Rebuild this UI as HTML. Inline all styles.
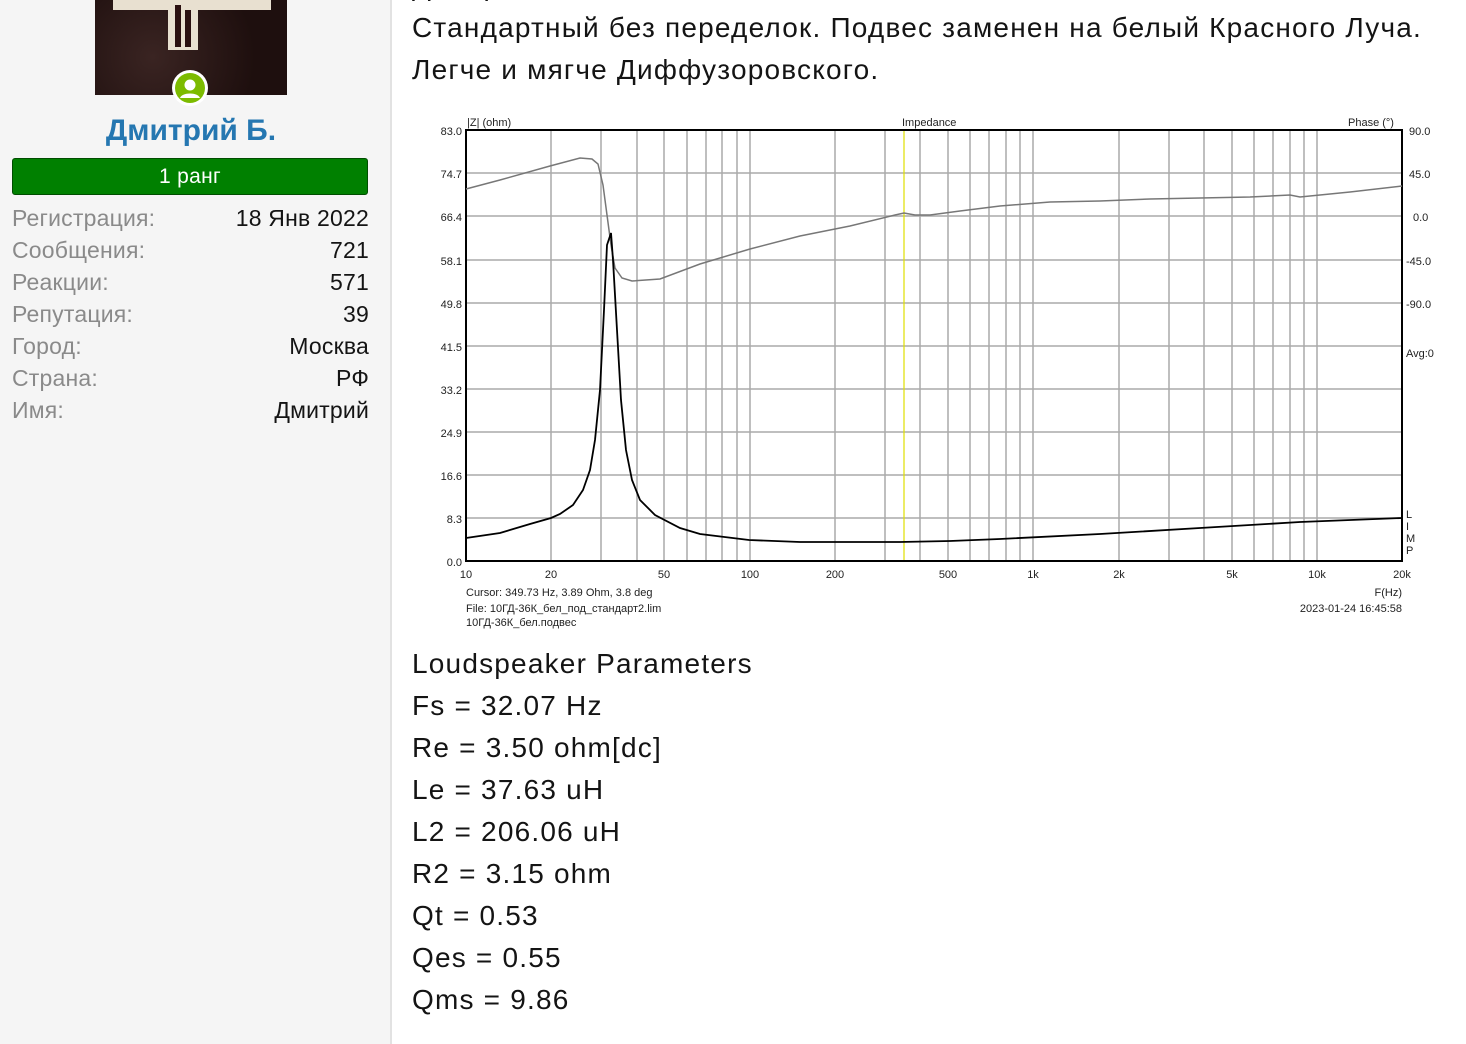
<!DOCTYPE html>
<html><head><meta charset="utf-8"><style>
html,body{margin:0;padding:0;width:1466px;height:1044px;overflow:hidden;background:#fff;font-family:"Liberation Sans",Arial,sans-serif;}
.side{position:absolute;left:0;top:0;width:390px;height:1044px;background:#f5f5f5;border-right:2px solid #e2e2e2;}
.av{position:absolute;left:95px;top:0;width:192px;height:95px;background:radial-gradient(circle at 30% 60%,#3a2422,#1e0f0e 70%);overflow:hidden}
.badge{position:absolute;left:172px;top:70px;width:36px;height:36px;border-radius:50%;background:#fff}
.badge i{position:absolute;left:3px;top:3px;width:30px;height:30px;border-radius:50%;background:#7cbb00;overflow:hidden}
.name{position:absolute;left:0;width:382px;top:114px;text-align:center;color:#2577b1;font-weight:bold;font-size:30px}
.rank{position:absolute;left:12px;top:158px;width:354px;height:35px;background:#008000;border:1.5px solid #004d00;border-radius:3px;color:#fff;font-size:21px;text-align:center;line-height:36px;letter-spacing:0.3px}
.row{position:absolute;left:12px;width:357px;font-size:23px;letter-spacing:0.2px;height:32px;line-height:32px}
.row span{color:#8a8a8a}.row b{float:right;font-weight:normal;color:#141414}
.t{position:absolute;left:412px;font-size:28px;letter-spacing:1.2px;color:#141414;white-space:nowrap;line-height:42px}
</style></head><body>
<div class="side">
<div class="av">
 <div style="position:absolute;left:18px;top:-6px;width:158px;height:16px;background:#e8e0d0"></div>
 <div style="position:absolute;left:73px;top:-6px;width:30px;height:56px;background:#e8e0d0"></div>
 <div style="position:absolute;left:80px;top:5px;width:6px;height:42px;background:#2a1010"></div>
 <div style="position:absolute;left:90px;top:10px;width:6px;height:37px;background:#2a1010"></div>
</div>
<div class="badge"><i><svg width="30" height="30" viewBox="0 0 30 30"><circle cx="15" cy="12" r="5.5" fill="#fff"/><path d="M5 25c2-6 18-6 20 0z" fill="#fff"/></svg></i></div>
<div class="name">Дмитрий Б.</div>
<div class="rank">1 ранг</div>
<div class="row" style="top:202px"><span>Регистрация:</span><b>18 Янв 2022</b></div>
<div class="row" style="top:234px"><span>Сообщения:</span><b>721</b></div>
<div class="row" style="top:266px"><span>Реакции:</span><b>571</b></div>
<div class="row" style="top:298px"><span>Репутация:</span><b>39</b></div>
<div class="row" style="top:330px"><span>Город:</span><b>Москва</b></div>
<div class="row" style="top:362px"><span>Страна:</span><b>РФ</b></div>
<div class="row" style="top:394px"><span>Имя:</span><b>Дмитрий</b></div>
</div>
<div class="t" style="top:-35px">Дмитрий Б. писал:</div>
<div class="t" style="top:7px">Стандартный без переделок. Подвес заменен на белый Красного Луча.</div>
<div class="t" style="top:49px">Легче и мягче Диффузоровского.</div>

<svg style="position:absolute;left:0;top:0" width="1466" height="1044" font-family="Liberation Sans,Arial,sans-serif" font-size="11" fill="#222">
<g stroke="#aaa" stroke-width="1.5">
<line x1="466" y1="173" x2="1402" y2="173"/><line x1="466" y1="216" x2="1402" y2="216"/><line x1="466" y1="260" x2="1402" y2="260"/><line x1="466" y1="303" x2="1402" y2="303"/><line x1="466" y1="346" x2="1402" y2="346"/><line x1="466" y1="389" x2="1402" y2="389"/><line x1="466" y1="432" x2="1402" y2="432"/><line x1="466" y1="475" x2="1402" y2="475"/><line x1="466" y1="518" x2="1402" y2="518"/>
<path d="M551 130V561M601 130V561M637 130V561M664 130V561M687 130V561M706 130V561M722 130V561M737 130V561M750 130V561M835 130V561M885 130V561M920 130V561M948 130V561M970 130V561M989 130V561M1006 130V561M1020 130V561M1033 130V561M1119 130V561M1169 130V561M1204 130V561M1232 130V561M1254 130V561M1273 130V561M1290 130V561M1304 130V561M1317 130V561"/>
</g>
<line x1="904" y1="130" x2="904" y2="561" stroke="#e0e000" stroke-width="1.2"/>
<rect x="466" y="130" width="936" height="431" fill="none" stroke="#000" stroke-width="2"/>
<path d="M466 189L500 180L550 166L580 158L592 159L598 164L603 185L607 215L611 245L615 268L622 278L632 281L660 279L700 264L750 249L800 236L850 226L895 215L904 213L915 215L930 215L960 211L1000 206L1050 202L1100 201L1150 199L1200 198L1250 197L1290 195L1300 197L1350 192L1402 186" fill="none" stroke="#777" stroke-width="1.5"/>
<path d="M466 538L500 533L530 524L551 518L560 514L573 505L583 490L590 470L595 440L600 390L604 310L607 245L611 233L613 260L617 330L621 400L626 450L632 480L640 500L655 515L680 528L700 534L749 540L800 542L900 542L950 541L1000 539L1100 534L1200 528L1300 522L1402 518" fill="none" stroke="#000" stroke-width="1.8"/>
<g text-anchor="end"><text x="462" y="135">83.0</text><text x="462" y="178">74.7</text><text x="462" y="221">66.4</text><text x="462" y="265">58.1</text><text x="462" y="308">49.8</text><text x="462" y="351">41.5</text><text x="462" y="394">33.2</text><text x="462" y="437">24.9</text><text x="462" y="480">16.6</text><text x="462" y="523">8.3</text><text x="462" y="566">0.0</text></g>
<g><text x="1409" y="135">90.0</text><text x="1409" y="178">45.0</text><text x="1413" y="221">0.0</text><text x="1406" y="265">-45.0</text><text x="1406" y="308">-90.0</text><text x="1406" y="357">Avg:0</text>
<text x="1406" y="518">L</text><text x="1406" y="530">I</text><text x="1406" y="542">M</text><text x="1406" y="554">P</text></g>
<text x="467" y="126">|Z| (ohm)</text><text x="902" y="126">Impedance</text><text x="1348" y="126">Phase (°)</text>
<g text-anchor="middle"><text x="466" y="578">10</text><text x="551" y="578">20</text><text x="664" y="578">50</text><text x="750" y="578">100</text><text x="835" y="578">200</text><text x="948" y="578">500</text><text x="1033" y="578">1k</text><text x="1119" y="578">2k</text><text x="1232" y="578">5k</text><text x="1317" y="578">10k</text><text x="1402" y="578">20k</text></g>
<text x="466" y="596">Cursor: 349.73 Hz, 3.89 Ohm, 3.8 deg</text>
<text x="466" y="612">File: 10ГД-36К_бел_под_стандарт2.lim</text>
<text x="466" y="626">10ГД-36К_бел.подвес</text>
<text x="1402" y="596" text-anchor="end">F(Hz)</text>
<text x="1402" y="612" text-anchor="end">2023-01-24 16:45:58</text>
</svg>

<div class="t" style="top:643px">Loudspeaker Parameters</div>
<div class="t" style="top:685px">Fs = 32.07 Hz</div>
<div class="t" style="top:727px">Re = 3.50 ohm[dc]</div>
<div class="t" style="top:769px">Le = 37.63 uH</div>
<div class="t" style="top:811px">L2 = 206.06 uH</div>
<div class="t" style="top:853px">R2 = 3.15 ohm</div>
<div class="t" style="top:895px">Qt = 0.53</div>
<div class="t" style="top:937px">Qes = 0.55</div>
<div class="t" style="top:979px">Qms = 9.86</div>
</body></html>
